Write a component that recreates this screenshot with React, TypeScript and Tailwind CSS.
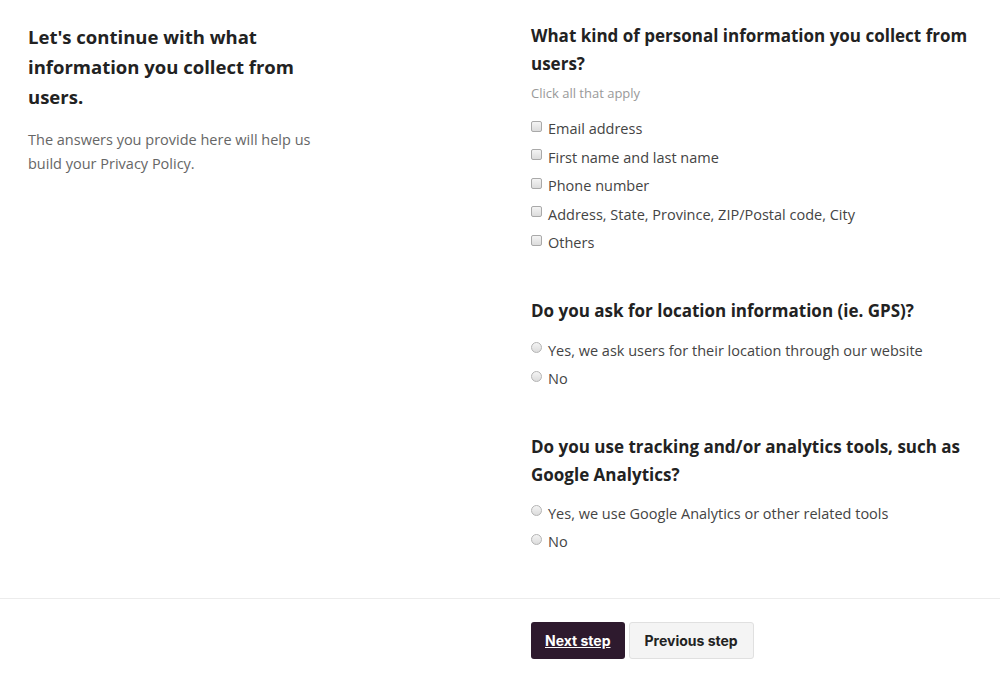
import React from "react";

const Check = () => (
  <span className="mt-[-6px] inline-block h-[11px] w-[11px] shrink-0 rounded-[2px] border border-[#a9a9a9] bg-gradient-to-b from-[#f4f4f4] to-[#dcdcdc]" />
);

const Radio = () => (
  <span className="mt-[-6px] inline-block h-[11px] w-[11px] shrink-0 rounded-full border border-[#b4b4b4] bg-gradient-to-b from-[#f4f4f4] to-[#dcdcdc]" />
);

function Option({ type, label }: { type: "check" | "radio"; label: string }) {
  return (
    <label className="flex h-[28.5px] items-center gap-[6px] text-[14.5px] text-[#444]">
      {type === "check" ? <Check /> : <Radio />}
      <span>{label}</span>
    </label>
  );
}

export default function App() {
  return (
    <div className="min-h-[685px] bg-white font-['Open_Sans',sans-serif]">
      <div className="flex pl-[28px] pr-[20px] pt-[22px]">
        <div className="w-[503px] shrink-0">
          <h1 className="w-[300px] text-[18.5px] font-bold leading-[30px] text-[#222]">
            Let's continue with what information you collect from users.
          </h1>
          <p className="mt-[16px] w-[300px] text-[14.5px] leading-[24px] text-[#666]">
            The answers you provide here will help us build your Privacy Policy.
          </p>
        </div>
        <div className="flex-1">
          <h2 className="text-[17px] font-bold leading-[28px] text-[#222]">
            What kind of personal information you collect from users?
          </h2>
          <p className="mt-[5px] text-[13px] leading-[20px] text-[#999]">Click all that apply</p>
          <div className="mt-[12px]">
            <Option type="check" label="Email address" />
            <Option type="check" label="First name and last name" />
            <Option type="check" label="Phone number" />
            <Option type="check" label="Address, State, Province, ZIP/Postal code, City" />
            <Option type="check" label="Others" />
          </div>

          <h2 className="mt-[39px] text-[17px] font-bold leading-[28px] text-[#222]">
            Do you ask for location information (ie. GPS)?
          </h2>
          <div className="mt-[12px]">
            <Option type="radio" label="Yes, we ask users for their location through our website" />
            <Option type="radio" label="No" />
          </div>

          <h2 className="mt-[39px] text-[17px] font-bold leading-[28px] text-[#222]">
            Do you use tracking and/or analytics tools, such as Google Analytics?
          </h2>
          <div className="mt-[11px]">
            <Option type="radio" label="Yes, we use Google Analytics or other related tools" />
            <Option type="radio" label="No" />
          </div>
        </div>
      </div>
      <div className="mt-[41px] border-t border-[#ececec]" />
      <div className="flex gap-[4px] pl-[531px] pt-[23px] font-['Inter',sans-serif]">
        <button className="h-[37px] rounded-[3px] bg-[#2e1a2e] px-[14px] text-[14px] font-bold text-white underline">
          Next step
        </button>
        <button className="h-[37px] rounded-[3px] border border-[#e0e0e0] bg-[#f4f4f4] px-[15px] text-[14px] font-bold text-[#222]">
          Previous step
        </button>
      </div>
    </div>
  );
}
